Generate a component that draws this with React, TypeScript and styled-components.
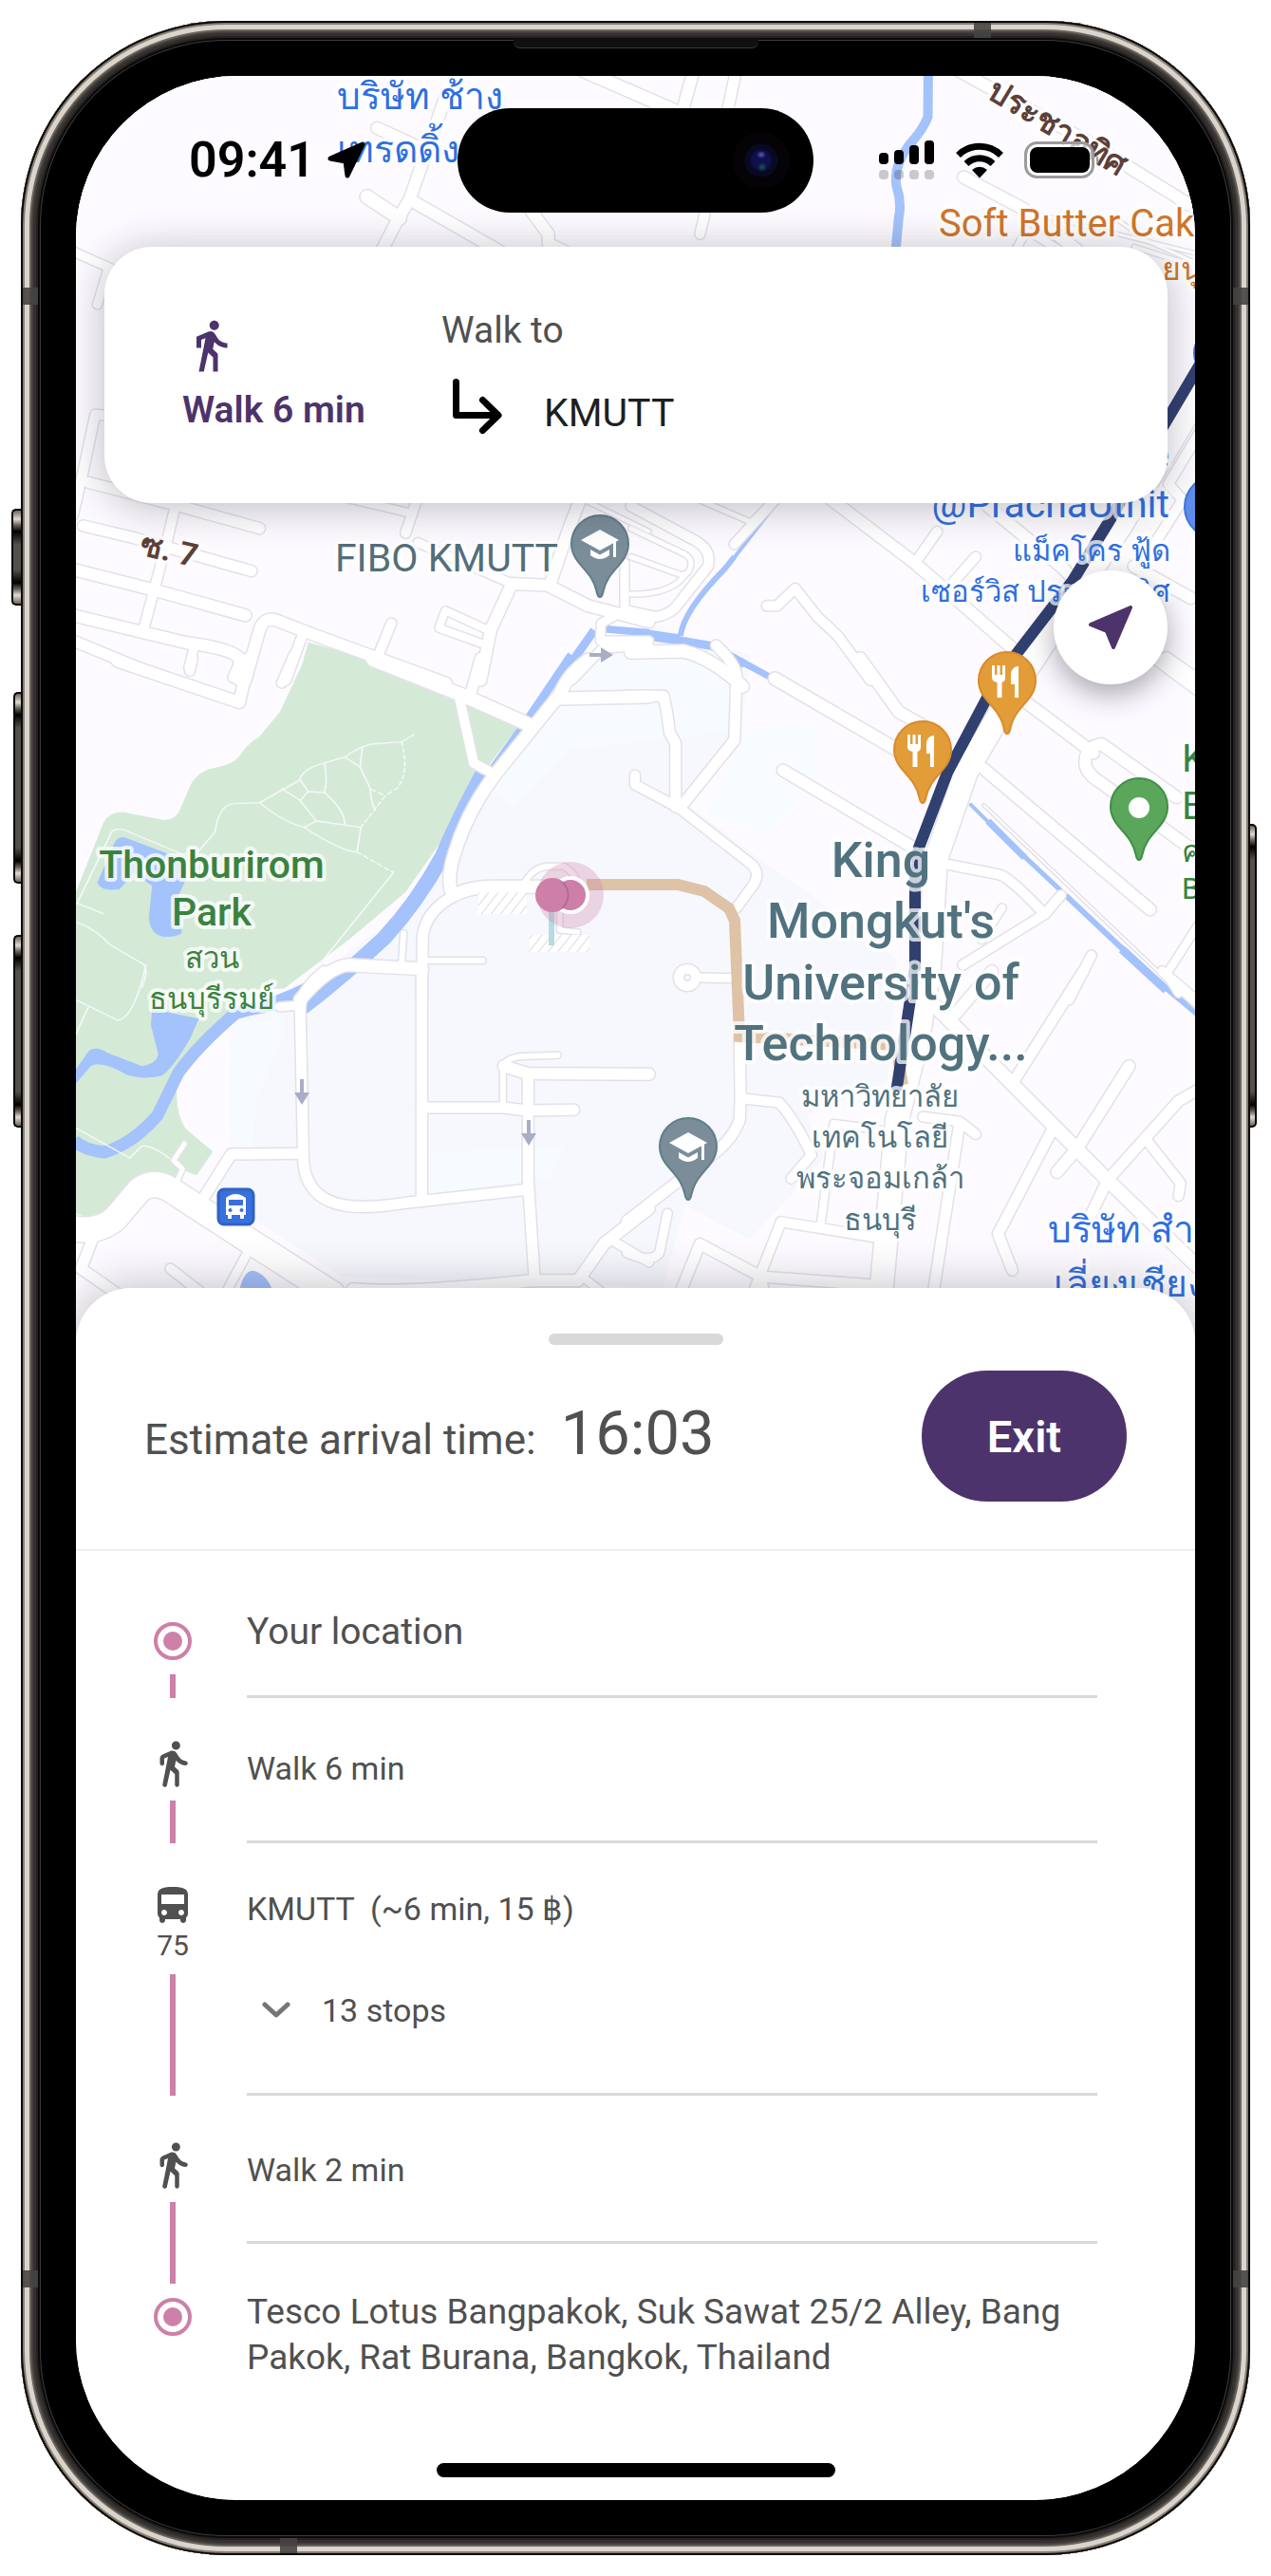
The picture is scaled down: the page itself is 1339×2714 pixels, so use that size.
import React from "react";
import styled, { createGlobalStyle, css } from "styled-components";

const UI_FONT = `Roboto, "Liberation Sans", "Noto Sans", sans-serif`;
const PLUM = "#4d336b";
const PINK = "#cd80a8";
const INK = "#505050";

const GlobalStyle = createGlobalStyle`
  *, *::before, *::after { box-sizing: border-box; }
  body { margin: 0; background: #ffffff; font-family: ${UI_FONT}; color: ${INK}; }
  button { font: inherit; color: inherit; border: 0; padding: 0; background: none; cursor: pointer; }
  p, h1, h2, ol { margin: 0; padding: 0; }
  svg { display: block; }
`;

/* ---------- Phone body ---------- */

const Page = styled.div`
  padding: 22px;
`;

const Device = styled.div`
  position: relative;
  padding: 58px;
  border-radius: 216px;
  background: #000000;
  box-shadow:
    inset 0 0 0 2px #0b0908,
    inset 0 0 0 4px #857d75,
    inset 0 0 0 9px #dad4cd,
    inset 0 0 0 11px #6a635d,
    inset 0 0 0 13px #44403d,
    inset 0 0 0 16px #33302f,
    inset 0 0 0 18px #242221,
    inset 0 0 0 20px #0a0a0a,
    inset 0 0 0 21px #3b3b3b;
`;

const SideButton = styled.span<{ $side: "left" | "right"; $top: number; $height: number; $depth: number }>`
  position: absolute;
  top: ${(p) => p.$top}px;
  ${(p) => p.$side}: ${(p) => -p.$depth}px;
  width: ${(p) => p.$depth}px;
  height: ${(p) => p.$height}px;
  border: 2px solid #050505;
  ${(p) => (p.$side === "left" ? "border-right: 0;" : "border-left: 0;")}
  border-radius: ${(p) => (p.$side === "left" ? "5px 0 0 5px" : "0 5px 5px 0")};
  background: linear-gradient(
    180deg,
    #6d655e 0,
    #e0dad3 9px,
    #6d655e 15px,
    #000000 22px,
    #54504c 36px,
    #54504c calc(100% - 36px),
    #000000 calc(100% - 22px),
    #6d655e calc(100% - 15px),
    #e0dad3 calc(100% - 9px),
    #6d655e 100%
  );
`;

const AntennaBand = styled.span<{ $edge: "top" | "bottom" | "left" | "right"; $at: number; $from?: "end" }>`
  position: absolute;
  background: rgba(70, 68, 66, 0.9);
  ${(p) =>
    p.$edge === "top" || p.$edge === "bottom"
      ? css`
          ${p.$edge}: 2px;
          ${p.$from === "end" ? "right" : "left"}: ${p.$at}px;
          width: 18px;
          height: 16px;
        `
      : css`
          ${p.$edge}: 2px;
          ${p.$from === "end" ? "bottom" : "top"}: ${p.$at}px;
          width: 16px;
          height: 18px;
        `}
`;

const Speaker = styled.span`
  position: absolute;
  top: 19px;
  left: 50%;
  width: 258px;
  height: 10px;
  margin-left: -129px;
  border-bottom: 1px solid #3a3a3a;
  border-radius: 0 0 7px 7px;
  background: #101010;
`;

const Screen = styled.main`
  overflow: hidden;
  border-radius: 170px;
  background: #ffffff;
`;

/* ---------- Map area ---------- */

const MapArea = styled.section`
  display: grid;
  background: #fdfbff;
  > * {
    grid-area: 1 / 1;
  }
`;

const MapDrawing = styled.svg`
  width: 100%;
  height: auto;
`;

const MapLabel = styled.text<{ $color: string; $size: number; $weight?: number }>`
  font-family: ${UI_FONT};
  font-size: ${(p) => p.$size}px;
  font-weight: ${(p) => p.$weight ?? 400};
  fill: ${(p) => p.$color};
  stroke: rgba(255, 255, 255, 0.75);
  stroke-width: 8px;
  stroke-linejoin: round;
  paint-order: stroke;
`;

const Overlay = styled.div`
  z-index: 1;
  display: flex;
  flex-direction: column;
`;

const StatusBar = styled.header`
  display: grid;
  grid-template-columns: 1fr 375px 1fr;
  align-items: center;
  padding: 34px 0 36px;
  color: #000000;
`;

const Clock = styled.div`
  display: flex;
  align-items: center;
  gap: 12px;
  padding-left: 119px;
  font-size: 52px;
  font-weight: 600;
  line-height: 60px;
`;

const Island = styled.div`
  display: flex;
  align-items: center;
  justify-content: flex-end;
  height: 110px;
  padding-right: 25px;
  border-radius: 55px;
  background: #000000;
`;

const Camera = styled.span`
  width: 60px;
  height: 60px;
  border-radius: 50%;
  background:
    radial-gradient(ellipse 5px 4px at 30px 24px, #5a5fb8, transparent),
    radial-gradient(ellipse 5px 5px at 31px 37px, #17554f, transparent),
    radial-gradient(circle at center, #0f0f52 0, #10104a 9px, #06061f 14px, #0b0b24 16px, #050307 18px, #060307 30px);
`;

const Signals = styled.div`
  display: flex;
  align-items: center;
  gap: 22px;
  padding-left: 69px;
`;

const TurnCard = styled.section`
  display: grid;
  grid-template-columns: 273px 1fr;
  align-items: center;
  margin: 0 29px 0 30px;
  padding: 64px 40px 64px 82px;
  border-radius: 50px;
  background: #ffffff;
  box-shadow: 0 4px 44px rgba(40, 30, 50, 0.3);
`;

const TurnMode = styled.div`
  display: flex;
  flex-direction: column;
  gap: 14px;
  color: ${PLUM};
  font-size: 39px;
  font-weight: 600;
  line-height: 48px;
`;

const TurnTarget = styled.div`
  display: flex;
  flex-direction: column;
  gap: 27px;
  padding-bottom: 7px;
  font-size: 39px;
  line-height: 48px;
`;

const TurnPlace = styled.div`
  display: flex;
  align-items: flex-end;
  gap: 40px;
  padding-left: 8px;
  color: #1f1f1f;
  font-size: 41px;
`;

const LocateButton = styled.button`
  display: grid;
  place-items: center;
  align-self: flex-end;
  width: 120px;
  height: 120px;
  margin: 71px 29px 0 0;
  border-radius: 50%;
  background: #ffffff;
  box-shadow: 0 10px 30px rgba(40, 30, 50, 0.4);
`;

/* ---------- Bottom sheet ---------- */

const Sheet = styled.section`
  position: relative;
  z-index: 2;
  margin-top: -63px;
  padding-top: 48px;
  border-radius: 58px 58px 0 0;
  background: #ffffff;
  box-shadow: 0 0 50px rgba(40, 30, 50, 0.3);
`;

const Grabber = styled.div`
  width: 184px;
  height: 12px;
  margin: 0 auto;
  border-radius: 6px;
  background: #d9d9d9;
`;

const SheetHeader = styled.div`
  display: flex;
  align-items: center;
  justify-content: space-between;
  padding: 27px 72px 50px;
  border-bottom: 2px solid #efefef;
`;

const Arrival = styled.p`
  display: flex;
  align-items: baseline;
  gap: 26px;
  font-size: 44px;
  line-height: 72px;
`;

const ArrivalTime = styled.time`
  font-size: 65px;
`;

const ExitButton = styled.button`
  width: 216px;
  height: 138px;
  border-radius: 69px;
  background: ${PLUM};
  color: #ffffff;
  font-size: 47px;
  font-weight: 600;
`;

const Steps = styled.ol`
  list-style: none;
  padding: 59px 103px 0 75px;
`;

const Step = styled.li`
  display: grid;
  grid-template-columns: 54px 1fr;
  column-gap: 51px;
`;

const Rail = styled.div<{ $top?: number }>`
  display: flex;
  flex-direction: column;
  align-items: center;
  padding-top: ${(p) => p.$top ?? 0}px;
`;

const RailBar = styled.span`
  flex: 1;
  width: 6px;
  margin-top: 12px;
  background: ${PINK};
`;

const RailLead = styled.span`
  width: 6px;
  height: 42px;
  margin-bottom: 12px;
  background: ${PINK};
`;

const RouteNumber = styled.span`
  font-size: 30px;
  line-height: 36px;
`;

const StepBody = styled.div<{ $top: number; $bottom: number; $last?: boolean; $size?: number }>`
  padding: ${(p) => p.$top}px 0 ${(p) => p.$bottom}px;
  border-bottom: ${(p) => (p.$last ? "0" : "3px solid #d9d9d9")};
  font-size: ${(p) => p.$size ?? 34}px;
  line-height: ${(p) => (p.$size ? 48 : 44)}px;
`;

const StopsToggle = styled.button`
  display: flex;
  align-items: center;
  gap: 33px;
  margin-top: 63px;
  padding-left: 16px;
  line-height: 44px;
`;

const HomeIndicator = styled.div`
  width: 420px;
  height: 15px;
  margin: 87px auto 0;
  border-radius: 8px;
  background: #000000;
`;

const SheetEnd = styled.div`
  padding-bottom: 24px;
`;

/* ---------- Icons ---------- */

const WalkSharp = () => (
  <svg width="60" height="60" viewBox="0 0 24 24" fill="currentColor" aria-hidden="true">
    <path d="M13.5 5.5c1.1 0 2-.9 2-2s-.9-2-2-2-2 .9-2 2 .9 2 2 2zM9.8 8.9L7 23h2.1l1.8-8 2.1 2v6h2v-7.5l-2.1-2 .6-3C14.8 12 16.8 13 19 13v-2c-1.9 0-3.5-1-4.3-2.4l-1-1.6c-.4-.6-1-1-1.7-1-.3 0-.5.1-.8.1L6 8.3V13h2V9.6l1.8-.7" />
  </svg>
);

const WalkRounded = () => (
  <svg width="54" height="54" viewBox="0 0 24 24" fill="currentColor" aria-hidden="true">
    <path d="M13.5 5.5c1.1 0 2-.9 2-2s-.9-2-2-2-2 .9-2 2 .9 2 2 2zM9.8 8.9L7.24 21.81c-.13.61.35 1.19.98 1.19h.08c.47 0 .87-.32.98-.78L10.9 15l2.1 2v5c0 .55.45 1 1 1s1-.45 1-1v-5.64c0-.55-.22-1.07-.62-1.45L12.9 13.5l.6-3c1.07 1.24 2.62 2.13 4.36 2.41.6.09 1.14-.39 1.14-1 0-.49-.36-.9-.84-.98-1.53-.25-2.8-1.15-3.46-2.33l-1-1.6c-.56-.89-1.68-1.25-2.66-.84L7.22 7.78C6.48 8.09 6 8.82 6 9.62V12c0 .55.45 1 1 1s1-.45 1-1V9.6l1.8-.7z" />
  </svg>
);

const BUS_PATH =
  "M4 16c0 .88.39 1.67 1 2.22v1.28c0 .83.67 1.5 1.5 1.5S8 20.33 8 19.5V19h8v.5c0 .82.67 1.5 1.5 1.5.82 0 1.5-.67 1.5-1.5v-1.28c.61-.55 1-1.34 1-2.22V6c0-3.5-3.58-4-8-4s-8 .5-8 4v10zm3.5 1c-.83 0-1.5-.67-1.5-1.5S6.67 14 7.5 14s1.5.67 1.5 1.5S8.33 17 7.5 17zm9 0c-.83 0-1.5-.67-1.5-1.5s.67-1.5 1.5-1.5 1.5.67 1.5 1.5-.67 1.5-1.5 1.5zm1.5-6H6V6h12v5z";

const BusIcon = () => (
  <svg width="48" height="48" viewBox="0 0 24 24" fill="currentColor" aria-hidden="true">
    <path d={BUS_PATH} />
  </svg>
);

const SpotIcon = () => (
  <svg width="46" height="46" viewBox="0 0 46 46" aria-hidden="true">
    <circle cx="23" cy="23" r="18" fill="none" stroke={PINK} strokeWidth="4" />
    <circle cx="23" cy="23" r="10" fill={PINK} />
  </svg>
);

const TurnArrow = () => (
  <svg width="60" height="60" viewBox="0 0 60 60" fill="none" stroke="#000000" strokeWidth="7" strokeLinecap="round" strokeLinejoin="round" aria-hidden="true">
    <path d="M7.500 3.500 V38.500 H51 M35.500 22.500 L52 38.500 L35.500 54.500" />
  </svg>
);

const LocationGlyph = () => (
  <svg width="42" height="42" viewBox="0 0 42 42" fill="#000000" stroke="#000000" strokeWidth="5" strokeLinejoin="round" aria-hidden="true">
    <path d="M38 4 L22 37 L20 22 L4 19 Z" />
  </svg>
);

const LocateGlyph = () => (
  <svg width="46" height="46" viewBox="0 0 46 46" fill={PLUM} stroke={PLUM} strokeWidth="4" strokeLinejoin="round" aria-hidden="true">
    <path d="M44 2 L26 44 L19 27 L2 20 Z" />
  </svg>
);

const Cellular = () => (
  <svg width="59" height="42" viewBox="0 0 59 42" aria-hidden="true">
    {[13, 10, 5, 0].map((y, i) => (
      <g key={y}>
        <rect x={i * 16} y={y} width="10" height={25 - y} rx="4" fill="#000000" />
        <rect x={i * 16} y="31" width="10" height="10" rx="4" fill="#000000" opacity="0.2" />
      </g>
    ))}
  </svg>
);

const Wifi = () => (
  <svg width="50" height="38" viewBox="0 0 50 38" aria-hidden="true">
    <g fill="none" stroke="#000000" strokeWidth="7">
      <path d="M2.500 13.500 A32 32 0 0 1 47.500 13.500" />
      <path d="M11 22.500 A20 20 0 0 1 39 22.500" />
    </g>
    <path d="M17 29 Q25 22.500 33 29 L25 37.500 Z" />
  </svg>
);

const Battery = () => (
  <svg width="82" height="40" viewBox="0 0 82 40" aria-hidden="true">
    <rect x="1.500" y="1.500" width="71" height="36" rx="12" fill="rgba(255,255,255,0.7)" stroke="#9b9b9d" strokeWidth="3" />
    <rect x="6" y="6" width="63" height="27" rx="8" />
    <path d="M76 14 Q81 19.500 76 25 Z" fill="#9b9b9d" />
  </svg>
);

const Chevron = () => (
  <svg width="30" height="20" viewBox="0 0 30 20" fill="none" stroke="#757575" strokeWidth="5" strokeLinecap="round" strokeLinejoin="round" aria-hidden="true">
    <path d="M3 4 L15 15 L27 4" />
  </svg>
);

/* ---------- Map data ---------- */

type Line = [width: number, d: string];

interface Tile {
  x: number;
  y: number;
  roads: Line[];
  water?: Line[];
}

const TILES: Tile[] = [
  {
    x: 0,
    y: 0,
    roads: [
      [12, "M930 405 L1040 470"],
      [12, "M1100 300 L1010 630 L980 695 L938 800"],
      [14, "M905 622 L985 690"],
      [12, "M1012 632 L1240 800"],
      [12, "M1300 650 L1352 740 L1352 770 L1400 800"],
      [13, "M1440 225 L1700 370"],
      [2, "M185 795 L280 840"],
    ],
  },
  {
    x: 669,
    y: 0,
    roads: [
      [12, "M145 220 L115 360"],
      [11, "M250 220 L228 350"],
      [10, "M175 660 L160 740"],
      [12, "M810 560 L960 662 L1090 790"],
      [12, "M800 225 L1120 450 L1420 690"],
      [8, "M935 800 L965 728 L1060 800"],
      [3, "M1185 690 L1260 760 L1400 840"],
      [3, "M1000 680 L1380 800"],
    ],
    water: [[10, "M723 220 L722 370 Q710 410 675 460 Q635 530 645 590 Q658 640 650 690 L642 800"]],
  },
  {
    x: 0,
    y: 250,
    roads: [
      [9, "M180 45 L268 95 L240 212"],
      [10, "M280 565 L235 560 L205 740 L180 880"],
      [11, "M218 775 L430 845 L640 920"],
      [10, "M432 850 L412 960 L355 1235"],
      [11, "M205 912 L330 950 L620 1055"],
      [12, "M180 1050 L380 1115 L605 1195"],
      [12, "M180 1195 L460 1282 Q570 1300 590 1330 L590 1400"],
      [11, "M180 1275 L340 1360"],
      [9, "M480 1290 L465 1360"],
      [12, "M605 1400 L640 1240 Q650 1200 680 1210 L760 1250 L1100 1410"],
      [10, "M745 1260 L705 1400"],
      [10, "M965 1220 L930 1330"],
      [10, "M1000 935 L1030 820"],
      [8, "M840 820 L1005 870"],
      [12, "M1358 1090 L1400 930 L1430 830"],
      [12, "M1185 1400 L1210 1240 L1262 1095 L1350 1100 L1450 1165 L1600 1215"],
      [9, "M1030 965 L1190 1055 L1262 1095"],
      [8, "M1200 1240 L1098 1180 L1082 1235 L1190 1285"],
      [9, "M1600 1275 L1480 1275 L1482 1220 L1540 1180 L1540 1030"],
      [4, "M1440 830 L1600 930"],
      [9, "M1410 1400 L1485 1300 L1600 1290"],
    ],
    water: [
      [8, "M1490 1238 L1600 1250"],
      [9, "M1395 1370 L1465 1242"],
    ],
  },
  {
    x: 669,
    y: 250,
    roads: [
      [10, "M-10 850 L150 960 Q190 990 180 1040 L100 1170 Q80 1195 50 1200 L-20 1180"],
      [5, "M-10 920 L120 1000 Q150 1020 130 1060 L115 1068 L-10 1010"],
      [5, "M-10 1128 Q90 1130 125 1065"],
      [10, "M245 970 L345 830"],
      [5, "M150 825 L285 900 L340 830"],
      [13, "M-10 1312 L120 1308 Q190 1330 265 1420"],
      [12, "M485 830 L690 1030 L940 1310"],
      [10, "M745 930 L690 1030"],
      [10, "M840 1010 L785 1090"],
      [10, "M325 1165 L350 1165 L395 1110 L450 1200 L500 1260 L580 1400"],
      [12, "M865 845 L1050 1040 L1120 1130"],
      [12, "M1230 1040 L1370 1140"],
      [10, "M1400 600 L1315 780 L1350 830 L1270 990"],
      [4, "M1230 30 L1400 100"],
      [13, "M1180 1230 L1400 1440"],
    ],
    water: [
      [4, "M355 830 L240 1020"],
      [6, "M245 1010 L220 1050 Q120 1180 112 1260"],
      [11, "M20 1255 L110 1272"],
      [9, "M80 1268 L190 1292 L270 1350"],
      [7, "M240 1325 L340 1395"],
    ],
  },
  {
    x: 0,
    y: 700,
    roads: [
      [12, "M290 -10 L590 120 L615 -20"],
      [10, "M468 20 L475 -20"],
      [10, "M575 42 L595 -20"],
      [10, "M695 58 L725 -30"],
      [14, "M920 -15 L1145 100 L1300 188"],
      [11, "M1185 -20 L1160 95"],
      [10, "M1133 108 L1168 312 L1215 345"],
      [13, "M1450 -15 Q1400 30 1380 95 L1235 325 Q1155 450 1120 600 Q1100 680 1115 725"],
      [13, "M1378 108 L1600 102"],
      [13, "M1115 732 Q1160 703 1210 703 L1400 703"],
      [11, "M1115 735 Q1050 780 1042 860 L1040 1060"],
      [6, "M1290 700 Q1310 642 1350 638 L1390 638 Q1420 660 1425 700"],
      [6, "M995 850 L990 950"],
      [6, "M1190 936 L1045 936"],
      [13, "M740 1060 Q810 955 860 950 L1040 962"],
      [5, "M1380 780 L1380 840 L1425 846"],
    ],
  },
  {
    x: 669,
    y: 700,
    roads: [
      [11, "M-20 100 L70 100 Q80 150 85 215 L100 250 L100 450"],
      [11, "M200 -60 Q250 0 250 40 L245 240 L110 455"],
      [10, "M0 350 L0 380 L110 455 L290 635 Q310 665 290 700 L250 770"],
      [13, "M345 45 L700 310"],
      [12, "M555 -20 L650 150 L740 215"],
      [12, "M365 335 L700 590"],
      [12, "M970 125 L1130 280"],
      [12, "M1310 -20 L1400 60"],
      [12, "M1335 420 L1150 252 Q1110 260 1110 310 Q1110 345 1150 375 L1400 610"],
      [12, "M860 330 L1270 775"],
      [10, "M770 632 L900 665 Q930 680 1010 790"],
      [10, "M1050 730 L1010 790 L808 950"],
      [8, "M905 770 L855 870"],
      [10, "M1125 920 L1070 1060"],
      [8, "M1400 800 L1310 980 L1340 1040"],
      [2, "M860 445 L1400 1105"],
      [9, "M165 990 L245 992"],
    ],
    water: [
      [5, "M255 -10 L335 42"],
      [4, "M825 440 L900 535"],
      [7, "M870 495 L960 610"],
      [5, "M950 595 L1050 715"],
      [6, "M1062 730 L1240 945"],
      [9, "M1200 900 L1310 1030"],
    ],
  },
  {
    x: 0,
    y: 1030,
    roads: [
      [11, "M800 -20 Q740 40 740 100 L748 580 Q755 700 850 720 Q900 732 1000 712 L1300 670"],
      [9, "M690 92 L740 88"],
      [11, "M1040 -30 L1040 700"],
      [11, "M1040 411 L1240 411 L1300 420 L1415 418"],
      [6, "M1240 405 L1240 280 Q1250 248 1300 248 L1375 245"],
      [12, "M1242 280 L1300 303 L1600 305"],
      [11, "M1302 310 L1302 640 L1318 955"],
      [11, "M505 690 L570 558 L745 556"],
      [26, "M170 790 Q240 812 285 760 L345 670 Q380 638 420 670 L600 820 L820 1000"],
      [11, "M230 820 L200 920 L290 1000"],
      [10, "M420 920 L500 1000"],
      [9, "M610 870 L555 1000"],
      [12, "M870 985 Q1000 1000 1310 958 L1425 958 L1490 840 L1600 730"],
      [9, "M1515 835 L1600 900"],
      [8, "M1440 950 L1490 1000"],
      [5, "M455 525 L428 578 L450 605 L438 640"],
    ],
  },
  {
    x: 669,
    y: 1030,
    roads: [
      [11, "M258 190 L260 380 L258 450 Q240 510 200 550 L-20 770"],
      [10, "M262 382 L355 395 Q390 440 435 560 L385 635"],
      [14, "M740 90 L1165 640 L1400 930"],
      [11, "M1105 -20 L935 325"],
      [12, "M880 -20 L790 115"],
      [12, "M1218 280 L1090 540 L1040 615"],
      [11, "M1025 490 L895 810 L930 925"],
      [11, "M1400 345 L1340 390 L1165 640 L1120 760"],
      [10, "M1265 520 L1345 650 L1340 690"],
      [10, "M710 440 L800 455 L840 495"],
      [11, "M800 460 L735 1000"],
      [8, "M600 480 L490 462 L458 780"],
      [10, "M590 820 L360 772 L290 1000"],
      [11, "M110 1000 L160 842 L310 945 L620 975"],
      [10, "M310 945 L320 1000"],
      [9, "M80 745 L60 870 Q40 905 -20 870"],
      [10, "M1300 -20 L1400 90"],
      [9, "M-20 306 L8 306"],
    ],
    water: [[6, "M1260 -20 L1400 130"]],
  },
];

const tileTransform = (x: number, y: number) => `translate(${x} ${y}) scale(0.4273 0.3333)`;

const MAIN_ROAD = "M1275 395 L1183 550 L1075 715 L1018 813 L986 905 L979 1020 L968 1090 L945 1180 L928 1365";

const Lines = ({ lines, color, extra = 0 }: { lines: Line[]; color: string; extra?: number }) => (
  <>
    {lines.map(([width, d]) => (
      <path key={d} d={d} stroke={color} strokeWidth={width + extra} vectorEffect="non-scaling-stroke" />
    ))}
  </>
);

const PIN_PATH = "M0 43 C-2 43 -3 40 -3.500 37 C-8 14 -30 8 -30 -13 A30 30 0 0 1 30 -13 C30 8 8 14 3.500 37 C3 40 2 43 0 43 Z";

const Pin = ({ x, y, fill, edge, children }: { x: number; y: number; fill: string; edge: string; children?: React.ReactNode }) => (
  <g transform={`translate(${x} ${y})`}>
    <path d={PIN_PATH} fill={fill} stroke={edge} strokeWidth="2" />
    {children}
  </g>
);

const SchoolGlyph = () => (
  <g fill="#ffffff">
    <path d="M0 -28 L20 -17 L0 -6 L-20 -17 Z" />
    <path d="M-10 -7 L0 -1.500 L10 -7 V-1 Q0 7 -10 -1 Z" />
    <rect x="14" y="-17" width="3" height="18" />
  </g>
);

const ForkKnifeGlyph = () => (
  <g fill="#ffffff">
    <path d="M-16 -29 h3 v10 h2.500 v-10 h3 v10 h2.500 v-10 h3 v13 q0 4 -3.500 5 V5 h-5 V-11 q-5.500 -1 -5.500 -5 Z" />
    <path d="M12 -28 V5 H8 V-9 H4 V-20 Q5 -28 12 -28 Z" />
  </g>
);

interface Label {
  t: string;
  x: number;
  y: number;
  size: number;
  color: string;
  weight?: number;
  anchor?: "start" | "middle" | "end";
  turn?: number;
}

const BLUE = "#2f6fe0";
const SLATE = "#51727f";
const GREEN = "#3a833f";
const BROWN = "#5d4037";
const ORANGE = "#cf762a";

const LABELS: Label[] = [
  { t: "บริษัท ช้าง", x: 355, y: 115, size: 39, color: BLUE },
  { t: "เทรดดิ้ง", x: 355, y: 171, size: 39, color: BLUE },
  { t: "ประชาอุทิศ", x: 1038, y: 102, size: 34, color: BROWN, weight: 700, turn: 31 },
  { t: "Soft Butter Cak", x: 989, y: 249, size: 40, color: ORANGE },
  { t: "ยนู่", x: 1224, y: 295, size: 34, color: ORANGE },
  { t: "e", x: 1232, y: 493, size: 41, color: BLUE, anchor: "end" },
  { t: "@PrachaUthit", x: 1232, y: 545, size: 41, color: BLUE, anchor: "end" },
  { t: "แม็คโคร ฟู้ด", x: 1233, y: 591, size: 31, color: BLUE, anchor: "end" },
  { t: "เซอร์วิส ประชาอุทิศ", x: 1233, y: 634, size: 31, color: BLUE, anchor: "end" },
  { t: "ซ. 7", x: 146, y: 584, size: 34, color: BROWN, weight: 700, turn: 13 },
  { t: "FIBO KMUTT", x: 588, y: 602, size: 41, color: "#546e7a", anchor: "end" },
  { t: "Thonburirom", x: 223, y: 925, size: 41, color: GREEN, weight: 500, anchor: "middle" },
  { t: "Park", x: 223, y: 975, size: 41, color: GREEN, weight: 500, anchor: "middle" },
  { t: "สวน", x: 223, y: 1020, size: 31, color: GREEN, anchor: "middle" },
  { t: "ธนบุรีรมย์", x: 223, y: 1063, size: 31, color: GREEN, anchor: "middle" },
  { t: "King", x: 928, y: 924, size: 52, color: SLATE, weight: 500, anchor: "middle" },
  { t: "Mongkut's", x: 928, y: 988, size: 52, color: SLATE, weight: 500, anchor: "middle" },
  { t: "University of", x: 928, y: 1053, size: 52, color: SLATE, weight: 500, anchor: "middle" },
  { t: "Technology...", x: 928, y: 1117, size: 52, color: SLATE, weight: 500, anchor: "middle" },
  { t: "มหาวิทยาลัย", x: 927, y: 1166, size: 31, color: SLATE, anchor: "middle" },
  { t: "เทคโนโลยี", x: 927, y: 1209, size: 31, color: SLATE, anchor: "middle" },
  { t: "พระจอมเกล้า", x: 927, y: 1252, size: 31, color: SLATE, anchor: "middle" },
  { t: "ธนบุรี", x: 927, y: 1296, size: 31, color: SLATE, anchor: "middle" },
  { t: "บริษัท สำ", x: 1104, y: 1309, size: 39, color: BLUE },
  { t: "เลี่ยงเชียง", x: 1110, y: 1366, size: 39, color: BLUE },
  { t: "K", x: 1245, y: 813, size: 41, color: GREEN },
  { t: "B", x: 1245, y: 863, size: 41, color: GREEN },
  { t: "ค", x: 1245, y: 908, size: 31, color: GREEN },
  { t: "B", x: 1245, y: 947, size: 31, color: GREEN },
];

const RouteMap = () => (
  <MapDrawing viewBox="80 80 1179 1340" fill="none" strokeLinecap="round" strokeLinejoin="round" role="img" aria-label="Map of the walking route to KMUTT">
    <defs>
      <pattern id="hatch" width="8" height="8" patternUnits="userSpaceOnUse" patternTransform="rotate(38)">
        <rect width="8" height="8" fill="#ffffff" />
        <rect width="1" height="8" fill="#dddbe2" />
      </pattern>
    </defs>
    <rect x="80" y="80" width="1179" height="1340" fill="#fdfbff" />

    {/* campus ground */}
    <path
      d="M612 700 L690 660 L790 690 L780 790 L715 840 L800 905 L850 940 L945 1010 L935 1140 L850 1175 L868 1220 L790 1306 L722 1270 L698 1357 L360 1345 L215 1250 L243 1210 L243 1080 L262 1062 L330 1030 L440 950 L478 860 L520 800 Z"
      fill="#f6f8fd"
    />
    <path d="M612 700 L700 660 L775 700 L770 770 L600 790 L540 850 L520 830 Z" fill="#f7fbff" />
    <path d="M780 770 L860 760 L862 820 L810 880 L745 860 Z" fill="#f8fbff" />
    <path d="M243 1078 L298 1070 L298 1090 L270 1160 L266 1208 L243 1208 Z M450 1215 L595 1208 L580 1240 L450 1258 Z" fill="#f7fbff" />

    {/* park */}
    <g transform={tileTransform(0, 700)}>
      <path
        d="M745 0 L760 -70 L930 -10 L1120 100 L1275 200 L1190 345 L1120 500 L1000 720 L860 870 L700 1025 L180 1025 L187 720 L255 500 Q270 465 305 467 L405 492 Q435 490 445 455 L470 380 Q490 335 530 327 Q575 315 590 290 Q610 250 640 228 L690 150 Z"
        fill="#d4ead7"
      />
      <path d="M280 570 Q290 540 310 548 L460 620 L455 690 L440 730 L448 850 Q430 865 400 860 Q370 850 367 800 L375 700 L330 660 L295 710 Q250 720 240 690 Z" fill="#a4c2fb" />
    </g>
    <g transform={tileTransform(0, 1030)}>
      <path
        d="M187 -10 L715 -10 L560 110 Q460 230 437 330 Q430 430 460 480 L525 550 L485 625 L455 610 L435 635 Q360 610 330 660 L270 750 Q240 775 187 745 Z"
        fill="#d4ead7"
      />
      <path d="M375 100 L490 130 L470 190 Q430 280 400 310 Q350 325 310 305 Q240 255 220 285 L187 335 V290 L220 230 Q240 215 265 238 L350 280 Q390 270 390 240 L372 150 Z" fill="#a4c2fb" />
      <path d="M590 990 Q600 925 625 926 Q660 940 672 990 Z" fill="#a4c2fb" />
    </g>

    {/* canals */}
    <g stroke="#a4c2fb" strokeLinecap="butt">
      <path d="M602 690 L548 770 L518 812" strokeWidth="9" />
      <path d="M518 812 L508 822" strokeWidth="11" />
      <path d="M508 816 Q482 864 466 902 Q440 950 405 988 Q360 1030 318 1062" strokeWidth="16" />
      <path d="M325 1052 L250 1066 Q210 1100 188 1130 L166 1175 Q140 1205 110 1214 Q90 1212 78 1202" strokeWidth="13" />
      <path d="M325 1040 Q290 1058 240 1070" strokeWidth="12" />
    </g>
    {TILES.map((t) => (
      <g key={`${t.x}-${t.y}`} transform={tileTransform(t.x, t.y)} strokeLinecap="butt">
        <Lines lines={t.water ?? []} color="#a4c2fb" />
      </g>
    ))}

    {/* park footpaths */}
    <g transform={tileTransform(0, 700)} stroke="#f6f7fb" strokeWidth="4">
      <path d="M190 755 L275 530 Q285 515 310 525 L450 600 L490 590 L530 530 Q540 440 580 440 L640 437 L740 365 Q745 330 800 312 L850 293 Q880 265 915 252 L990 245 L1020 222" />
      <path d="M640 437 Q700 500 750 515 Q840 590 880 593 L890 515 L780 495 L740 430 L695 393" />
      <path d="M740 365 L760 402 L800 405 Q850 460 850 505 M800 312 Q808 360 800 405 M740 430 L760 402 M750 515 L780 495 M850 293 L888 325 L893 265" />
      <path d="M888 325 L912 390 Q915 440 925 460" />
      <path d="M990 245 Q1010 340 980 390 L950 415 L890 515 M915 395 L950 415 M880 593 L970 658" strokeDasharray="12 9" />
      <path d="M970 658 L790 945 M190 815 Q240 840 270 885 L350 945 Q370 960 350 1020 M190 755 L255 788" />
    </g>
    <g transform={tileTransform(0, 1030)} stroke="#f6f7fb" strokeWidth="4">
      <path d="M187 70 L290 135 Q330 130 360 -40 M185 185 L217 95 M187 475 L320 570 L350 532 Q370 530 400 555 L450 600" />
    </g>

    {/* street casings, then street surfaces */}
    {TILES.map((t) => (
      <g key={`${t.x}-${t.y}`} transform={tileTransform(t.x, t.y)}>
        <Lines lines={t.roads} color="#e3e1e8" extra={3} />
      </g>
    ))}
    <circle cx="724" cy="1030" r="9" stroke="#e3e1e8" strokeWidth="13" />
    <path d={MAIN_ROAD} stroke="#e3e1e8" strokeWidth="27" />
    {TILES.map((t) => (
      <g key={`${t.x}-${t.y}`} transform={tileTransform(t.x, t.y)}>
        <Lines lines={t.roads} color="#ffffff" />
      </g>
    ))}
    <circle cx="724" cy="1030" r="9" stroke="#ffffff" strokeWidth="10" />
    <path d={MAIN_ROAD} stroke="#ffffff" strokeWidth="24" />

    {/* building footprints beside the route start */}
    <path d="M504 940 H555 V963 H504 Z M558 985 H621 V1003 H558 Z" fill="url(#hatch)" />

    {/* one-way arrows */}
    <g fill="#a9aec6">
      <path d="M316 1137 h4 v14 h6 l-8 13 -8 -13 h6 Z" />
      <path d="M555 1180 h4 v14 h6 l-8 13 -8 -13 h6 Z" />
      <path d="M621 688 h12 v-6 l13 8 -13 8 v-6 h-12 Z" />
    </g>

    {/* walking and bus routes */}
    <path d="M581 960 V996" stroke="#b7dbe1" strokeWidth="6" strokeLinecap="butt" />
    <path d="M618 932 L714 932 L742 939 L768 957 L774 970 L779 1092 L944 1101 L951 1143" stroke="#dfc3a6" strokeWidth="12" strokeLinecap="butt" strokeLinejoin="miter" />
    <path d="M1264 384 L1225 450 L1171 545 L1130 612 L1070 690 L1041 733 L998 814 L968 893 L964 925 L964 1020 L945 1145" stroke="#30406f" strokeWidth="12" />

    {/* current position */}
    <circle cx="601" cy="943" r="35" fill="#cd7fa8" opacity="0.3" />
    <circle cx="601" cy="943" r="18" fill="#cd7fa8" stroke="#ffffff" strokeWidth="4" />
    <circle cx="582" cy="943" r="18" fill="#cd7fa8" />
    <path d="M593 930 A18 18 0 0 1 593 956" stroke="#b56a94" strokeWidth="2" />

    {/* pins */}
    <circle cx="1281" cy="534" r="33" fill="#5f8eea" stroke="#3f76dc" strokeWidth="2" />
    <circle cx="1285" cy="372" r="28" fill="#5a67b8" />
    <Pin x={632} y={586} fill="#7a8d99" edge="#607d8b">
      <SchoolGlyph />
    </Pin>
    <Pin x={725} y={1221} fill="#7a8d99" edge="#607d8b">
      <SchoolGlyph />
    </Pin>
    <Pin x={972} y={803} fill="#e39d38" edge="#da8a2d">
      <ForkKnifeGlyph />
    </Pin>
    <Pin x={1061} y={730} fill="#e39d38" edge="#da8a2d">
      <ForkKnifeGlyph />
    </Pin>
    <Pin x={1200} y={863} fill="#5aa75c" edge="#3f8f45">
      <circle cx="0" cy="-12" r="11" fill="#ffffff" />
    </Pin>
    <g>
      <rect x="230" y="1253" width="37" height="37" rx="6" fill="#3870dd" stroke="#2f62c6" strokeWidth="3" />
      <path d="M238 1262 Q248 1254 259 1262 V1280 H257 V1284 H253 V1280 H244 V1284 H240 V1280 H238 Z" fill="#ffffff" />
      <path d="M241 1264 H256 V1270 H241 Z" fill="#3870dd" />
      <circle cx="242.500" cy="1275" r="2" fill="#3870dd" />
      <circle cx="254.500" cy="1275" r="2" fill="#3870dd" />
    </g>

    {LABELS.map((l) => (
      <MapLabel
        key={`${l.t}-${l.y}`}
        x={l.x}
        y={l.y}
        textAnchor={l.anchor ?? "start"}
        transform={l.turn ? `rotate(${l.turn} ${l.x} ${l.y})` : undefined}
        $color={l.color}
        $size={l.size}
        $weight={l.weight}
      >
        {l.t}
      </MapLabel>
    ))}
  </MapDrawing>
);

/* ---------- Screen ---------- */

export default function App() {
  return (
    <Page>
      <GlobalStyle />
      <Device>
        <SideButton $side="left" $top={514} $height={102} $depth={10} />
        <SideButton $side="left" $top={707} $height={202} $depth={8} />
        <SideButton $side="left" $top={963} $height={203} $depth={8} />
        <SideButton $side="right" $top={846} $height={320} $depth={7} />
        <AntennaBand $edge="top" $at={273} $from="end" />
        <AntennaBand $edge="bottom" $at={273} />
        <AntennaBand $edge="left" $at={281} />
        <AntennaBand $edge="right" $at={281} />
        <AntennaBand $edge="left" $at={282} $from="end" />
        <AntennaBand $edge="right" $at={282} $from="end" />
        <Speaker />
        <Screen>
          <MapArea>
            <RouteMap />
            <Overlay>
              <StatusBar>
                <Clock>
                  <time>09:41</time>
                  <LocationGlyph />
                </Clock>
                <Island>
                  <Camera />
                </Island>
                <Signals>
                  <Cellular />
                  <Wifi />
                  <Battery />
                </Signals>
              </StatusBar>
              <TurnCard>
                <TurnMode>
                  <WalkSharp />
                  <p>Walk 6 min</p>
                </TurnMode>
                <TurnTarget>
                  <p>Walk to</p>
                  <TurnPlace>
                    <TurnArrow />
                    <span>KMUTT</span>
                  </TurnPlace>
                </TurnTarget>
              </TurnCard>
              <LocateButton aria-label="Centre the map on my location">
                <LocateGlyph />
              </LocateButton>
            </Overlay>
          </MapArea>

          <Sheet>
            <Grabber />
            <SheetHeader>
              <Arrival>
                Estimate arrival time: <ArrivalTime>16:03</ArrivalTime>
              </Arrival>
              <ExitButton>Exit</ExitButton>
            </SheetHeader>
            <Steps>
              <Step>
                <Rail $top={13}>
                  <SpotIcon />
                  <RailBar />
                </Rail>
                <StepBody $top={2} $bottom={43} $size={39}>
                  Your location
                </StepBody>
              </Step>
              <Step>
                <Rail $top={42}>
                  <WalkRounded />
                  <RailBar />
                </Rail>
                <StepBody $top={52} $bottom={54}>
                  Walk 6 min
                </StepBody>
              </Step>
              <Step>
                <Rail $top={42}>
                  <BusIcon />
                  <RouteNumber>75</RouteNumber>
                  <RailBar />
                </Rail>
                <StepBody $top={47} $bottom={65}>
                  <p>KMUTT &nbsp;(~6 min, 15 ฿)</p>
                  <StopsToggle aria-expanded="false">
                    <Chevron />
                    13 stops
                  </StopsToggle>
                </StepBody>
              </Step>
              <Step>
                <Rail $top={46}>
                  <WalkRounded />
                  <RailBar />
                </Rail>
                <StepBody $top={56} $bottom={53}>
                  Walk 2 min
                </StepBody>
              </Step>
              <Step>
                <Rail>
                  <RailLead />
                  <SpotIcon />
                </Rail>
                <StepBody $top={48} $bottom={0} $last $size={37}>
                  Tesco Lotus Bangpakok, Suk Sawat 25/2 Alley, Bang Pakok, Rat Burana, Bangkok, Thailand
                </StepBody>
              </Step>
            </Steps>
            <SheetEnd>
              <HomeIndicator />
            </SheetEnd>
          </Sheet>
        </Screen>
      </Device>
    </Page>
  );
}
